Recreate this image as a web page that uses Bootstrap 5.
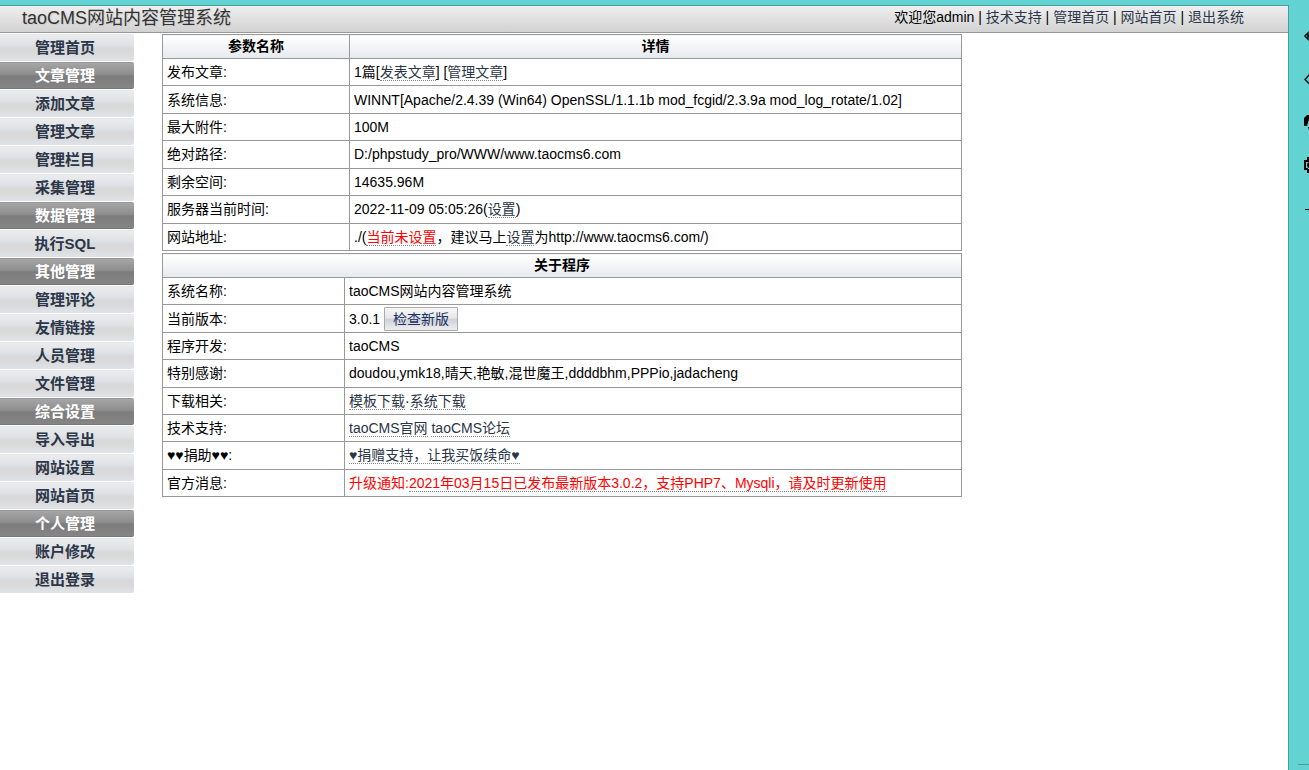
<!DOCTYPE html>
<html lang="zh-CN">
<head>
<meta charset="utf-8">
<meta name="viewport" content="width=device-width, initial-scale=1">
<title>taoCMS网站内容管理系统</title>
<link href="https://cdn.jsdelivr.net/npm/bootstrap@5.3.0/dist/css/bootstrap.min.css" rel="stylesheet">
<style>
body{background:#62d2d2;color:#000;font:14px/18px "Liberation Sans","Noto Sans CJK SC",sans-serif}
a{color:#2b3648;text-decoration:none}
.window{margin-top:5px;border-top:1px solid #4a9c9f;border-right:1px solid #4a9c9f;min-width:0}
.topbar{height:27px;background:linear-gradient(#efefef,#d2d2d2);border-bottom:1px solid #999;padding:0 44px 0 22px}
.topbar h1{font-size:18px;line-height:24px;color:#333;text-shadow:1px 1px 1px #ccc}
.topbar nav{line-height:22px}
.side{width:134px;padding-top:1px}
.side a,.side h2{font-size:15px;font-weight:bold;line-height:26px;height:27px;margin:0 0 1px;padding-right:4px;text-align:center;border-radius:0 2px 2px 0;display:block}
.side a{background:linear-gradient(#ebecee 0,#dde0e5 42%,#d8d8d8 50%,#dadada 72%,#dfe3e9 100%);border-top:1px solid #e6e6e6}
.side h2{color:#fff;background:linear-gradient(#a5a5a5,#8e8e8e 45%,#7c7c7c 52%,#858585);border-top:1px solid #999;border-bottom:1px solid #777}
.content{padding:1px 0 0 28px}
.sheet{width:800px;max-width:100%;border-collapse:collapse;margin-bottom:2px}
.sheet th,.sheet td{border:1px solid #999;padding:4px}
.sheet th{height:24px;padding:2px 4px;line-height:19px;text-align:center;background:linear-gradient(#fff,#e6eaee)}
.sheet a{border-bottom:1px dotted #888;display:inline-block;line-height:16px}
.sheet a.alert-link-red,.notice{color:#f00}
.params{height:217px}
.about{height:244px}
.params .name-col{width:187px}
.about .name-col{width:182px}
.sheet td.has-button{padding:0 4px}
.check{height:24px;border:1px solid #aaa;border-radius:1px;padding:0 8px;line-height:20px;color:#1c3263;background:linear-gradient(#f8f8f8,#e6e7e9 45%,#d0d2d8 52%,#eee)}
.tools{width:20px;padding-top:27px}
.tools button{display:block;width:20px;height:18px;margin:0 0 25px;padding:0 0 0 14px;border:0;background:none}
.tools svg{display:block;width:18px;height:18px}
.tools hr{margin:0 0 5px 9px;border-top:1px solid #4a9c9f;opacity:1}
</style>
</head>
<body>
<div class="d-flex min-vh-100">
<div class="window flex-grow-1 bg-white">
  <header class="topbar d-flex justify-content-between">
    <h1 class="m-0 fw-normal">taoCMS网站内容管理系统</h1>
    <nav>欢迎您admin | <a href="#">技术支持</a> | <a href="#">管理首页</a> | <a href="#">网站首页</a> | <a href="#">退出系统</a></nav>
  </header>
  <div class="d-flex">
    <nav class="side flex-shrink-0">
      <a href="#">管理首页</a>
      <h2>文章管理</h2>
      <a href="#">添加文章</a>
      <a href="#">管理文章</a>
      <a href="#">管理栏目</a>
      <a href="#">采集管理</a>
      <h2>数据管理</h2>
      <a href="#">执行SQL</a>
      <h2>其他管理</h2>
      <a href="#">管理评论</a>
      <a href="#">友情链接</a>
      <a href="#">人员管理</a>
      <a href="#">文件管理</a>
      <h2>综合设置</h2>
      <a href="#">导入导出</a>
      <a href="#">网站设置</a>
      <a href="#">网站首页</a>
      <h2>个人管理</h2>
      <a href="#">账户修改</a>
      <a href="#">退出登录</a>
    </nav>
    <main class="content flex-grow-1">
      <table class="sheet params">
        <thead><tr><th class="name-col">参数名称</th><th>详情</th></tr></thead>
        <tbody>
        <tr><td>发布文章:</td><td>1篇[<a href="#">发表文章</a>] [<a href="#">管理文章</a>]</td></tr>
        <tr><td>系统信息:</td><td>WINNT[Apache/2.4.39 (Win64) OpenSSL/1.1.1b mod_fcgid/2.3.9a mod_log_rotate/1.02]</td></tr>
        <tr><td>最大附件:</td><td>100M</td></tr>
        <tr><td>绝对路径:</td><td>D:/phpstudy_pro/WWW/www.taocms6.com</td></tr>
        <tr><td>剩余空间:</td><td>14635.96M</td></tr>
        <tr><td>服务器当前时间:</td><td>2022-11-09 05:05:26(<a href="#">设置</a>)</td></tr>
        <tr><td>网站地址:</td><td>./(<a href="#" class="alert-link-red">当前未设置</a>，建议马上<a href="#">设置</a>为http://www.taocms6.com/)</td></tr>
        </tbody>
      </table>
      <table class="sheet about">
        <colgroup><col class="name-col"><col></colgroup>
        <thead><tr><th colspan="2">关于程序</th></tr></thead>
        <tbody>
        <tr><td>系统名称:</td><td>taoCMS网站内容管理系统</td></tr>
        <tr><td>当前版本:</td><td class="has-button">3.0.1 <button type="button" class="check">检查新版</button></td></tr>
        <tr><td>程序开发:</td><td>taoCMS</td></tr>
        <tr><td>特别感谢:</td><td>doudou,ymk18,晴天,艳敏,混世魔王,ddddbhm,PPPio,jadacheng</td></tr>
        <tr><td>下载相关:</td><td><a href="#">模板下载</a>·<a href="#">系统下载</a></td></tr>
        <tr><td>技术支持:</td><td><a href="#">taoCMS官网</a> <a href="#">taoCMS论坛</a></td></tr>
        <tr><td>♥♥捐助♥♥:</td><td><a href="#">♥捐赠支持，让我买饭续命♥</a></td></tr>
        <tr><td>官方消息:</td><td class="notice">升级通知:<a href="#" class="alert-link-red">2021年03月15日已发布最新版本3.0.2，支持PHP7、Mysqli，请及时更新使用</a></td></tr>
        </tbody>
      </table>
    </main>
  </div>
</div>
<aside class="tools d-flex flex-column flex-shrink-0 overflow-hidden">
  <button type="button" class="overflow-hidden" aria-label="移动"><svg viewBox="0 0 18 18" fill="none" stroke="#111" stroke-width="1.6"><path d="M5 6 2 9l3 3zM13 6l3 3-3 3zM5 9h8"/></svg></button>
  <button type="button" class="overflow-hidden" aria-label="标签"><svg viewBox="0 0 18 18" fill="none" stroke="#111" stroke-width="1.4"><path d="M7 4 2 9.500l5 5 6 0 4-5-4-5.500z"/></svg></button>
  <button type="button" class="overflow-hidden" aria-label="通知"><svg viewBox="0 0 18 18"><path d="M4 2h8l4 4v6h-3V6H6L4 13H1V5zM5 14h5v3H6z"/></svg></button>
  <button type="button" class="overflow-hidden" aria-label="打印"><svg viewBox="0 0 18 18" fill="none" stroke="#000" stroke-width="2"><path d="M5 5V2h9v3M5 5H2v8h3M5 13v3h9v-3h3V5H5"/><circle cx="7" cy="9" r="2"/></svg></button>
  <button type="button" class="overflow-hidden" aria-label="更多"><svg viewBox="0 0 18 18" stroke="#111"><path d="M2 10.500h14"/></svg></button>
  <hr class="mt-auto">
</aside>
</div>
<script src="https://cdn.jsdelivr.net/npm/bootstrap@5.3.0/dist/js/bootstrap.bundle.min.js"></script>
</body>
</html>
